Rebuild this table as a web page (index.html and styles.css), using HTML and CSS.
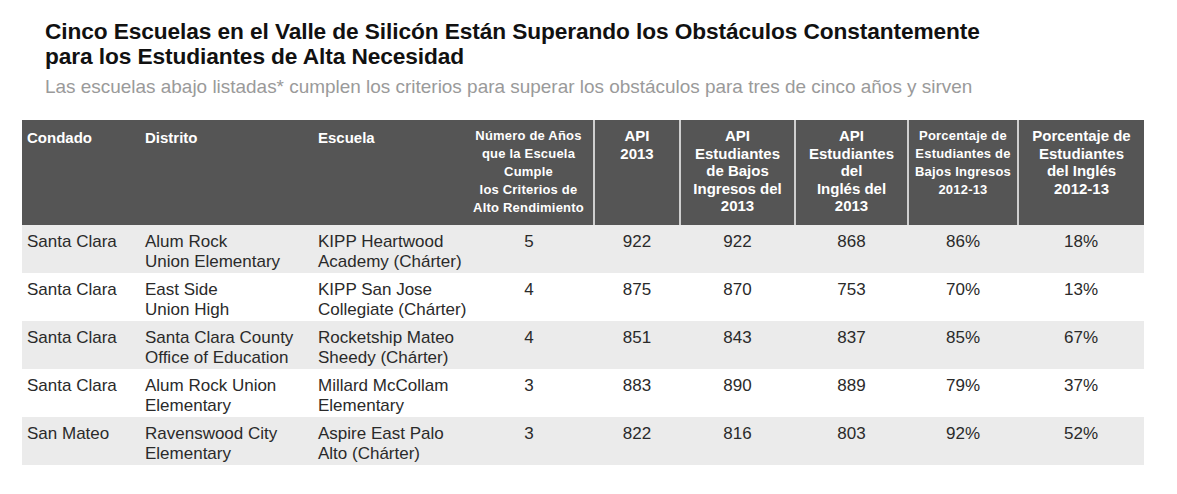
FILE: index.html
```html
<!DOCTYPE html>
<html lang="es">
<head>
<meta charset="utf-8">
<title>Cinco Escuelas</title>
<link rel="stylesheet" href="styles.css">
</head>
<body>
<div class="page">
  <header class="intro">
    <h1 class="title">Cinco Escuelas en el Valle de Silicón Están Superando los Obstáculos Constantemente<br>para los Estudiantes de Alta Necesidad</h1>
    <p class="subtitle">Las escuelas abajo listadas* cumplen los criterios para superar los obstáculos para tres de cinco años y sirven</p>
  </header>
  <table class="data">
    <colgroup>
      <col class="c1"><col class="c2"><col class="c3"><col class="c4"><col class="c5"><col class="c6"><col class="c7"><col class="c8"><col class="c9">
    </colgroup>
    <thead>
      <tr>
        <th class="left">Condado</th>
        <th class="left">Distrito</th>
        <th class="left">Escuela</th>
        <th class="small">Número de Años<br>que la Escuela<br>Cumple<br>los Criterios de<br>Alto Rendimiento</th>
        <th class="div">API<br>2013</th>
        <th class="div">API<br>Estudiantes<br>de Bajos<br>Ingresos del<br>2013</th>
        <th class="div">API<br>Estudiantes<br>del<br>Inglés del<br>2013</th>
        <th class="div small">Porcentaje de<br>Estudiantes de<br>Bajos Ingresos<br>2012-13</th>
        <th class="div">Porcentaje de<br>Estudiantes<br>del Inglés<br>2012-13</th>
      </tr>
    </thead>
    <tbody>
      <tr>
        <td>Santa Clara</td><td>Alum Rock<br>Union Elementary</td><td>KIPP Heartwood<br>Academy (Chárter)</td>
        <td class="num">5</td><td class="num">922</td><td class="num">922</td><td class="num">868</td><td class="num">86%</td><td class="num">18%</td>
      </tr>
      <tr>
        <td>Santa Clara</td><td>East Side<br>Union High</td><td>KIPP San Jose<br>Collegiate (Chárter)</td>
        <td class="num">4</td><td class="num">875</td><td class="num">870</td><td class="num">753</td><td class="num">70%</td><td class="num">13%</td>
      </tr>
      <tr>
        <td>Santa Clara</td><td>Santa Clara County<br>Office of Education</td><td>Rocketship Mateo<br>Sheedy (Chárter)</td>
        <td class="num">4</td><td class="num">851</td><td class="num">843</td><td class="num">837</td><td class="num">85%</td><td class="num">67%</td>
      </tr>
      <tr>
        <td>Santa Clara</td><td>Alum Rock Union<br>Elementary</td><td>Millard McCollam<br>Elementary</td>
        <td class="num">3</td><td class="num">883</td><td class="num">890</td><td class="num">889</td><td class="num">79%</td><td class="num">37%</td>
      </tr>
      <tr>
        <td>San Mateo</td><td>Ravenswood City<br>Elementary</td><td>Aspire East Palo<br>Alto (Chárter)</td>
        <td class="num">3</td><td class="num">822</td><td class="num">816</td><td class="num">803</td><td class="num">92%</td><td class="num">52%</td>
      </tr>
    </tbody>
  </table>
</div>
</body>
</html>
```

FILE: styles.css
```css
html, body {
  margin: 0;
  padding: 0;
  background: #ffffff;
}

body {
  font-family: "Liberation Sans", Arial, Helvetica, sans-serif;
  color: #222;
}

.page {
  padding: 19px 0 0 22px;
}

.intro {
  padding-left: 23px;
}

.title {
  margin: 0;
  font-size: 22.7px;
  line-height: 25px;
  font-weight: bold;
  color: #111;
  letter-spacing: -0.1px;
}

.subtitle {
  margin: 7px 0 0;
  font-size: 18.95px;
  line-height: 22px;
  color: #9a9a9a;
}

.data {
  margin-top: 22px;
  width: 1122px;
  table-layout: fixed;
  border-collapse: collapse;
}

.c1 { width: 118px; }
.c2 { width: 173px; }
.c3 { width: 151px; }
.c4 { width: 130px; }
.c5 { width: 86px; }
.c6 { width: 115px; }
.c7 { width: 113px; }
.c8 { width: 110px; }
.c9 { width: 126px; }

.data thead th {
  background: #555555;
  color: #ffffff;
  font-size: 15px;
  line-height: 17.5px;
  font-weight: bold;
  vertical-align: top;
  text-align: center;
  padding: 7px 2px 8px;
  height: 88px;
  white-space: nowrap;
}

.data thead th.left {
  text-align: left;
  padding-left: 5px;
  padding-top: 9px;
}

.data thead th.small {
  font-size: 13px;
  line-height: 18px;
  letter-spacing: 0.2px;
}

.data thead th.div {
  border-left: 2px solid #cfcfcf;
}

.data tbody td {
  font-size: 17px;
  line-height: 20px;
  color: #2a2a2a;
  vertical-align: top;
  padding: 7px 0 1px 5px;
  height: 40px;
  white-space: nowrap;
}

.data tbody tr:nth-child(odd) td {
  background: #ebebeb;
}

.data tbody td.num {
  text-align: center;
  padding-left: 0;
}
```
